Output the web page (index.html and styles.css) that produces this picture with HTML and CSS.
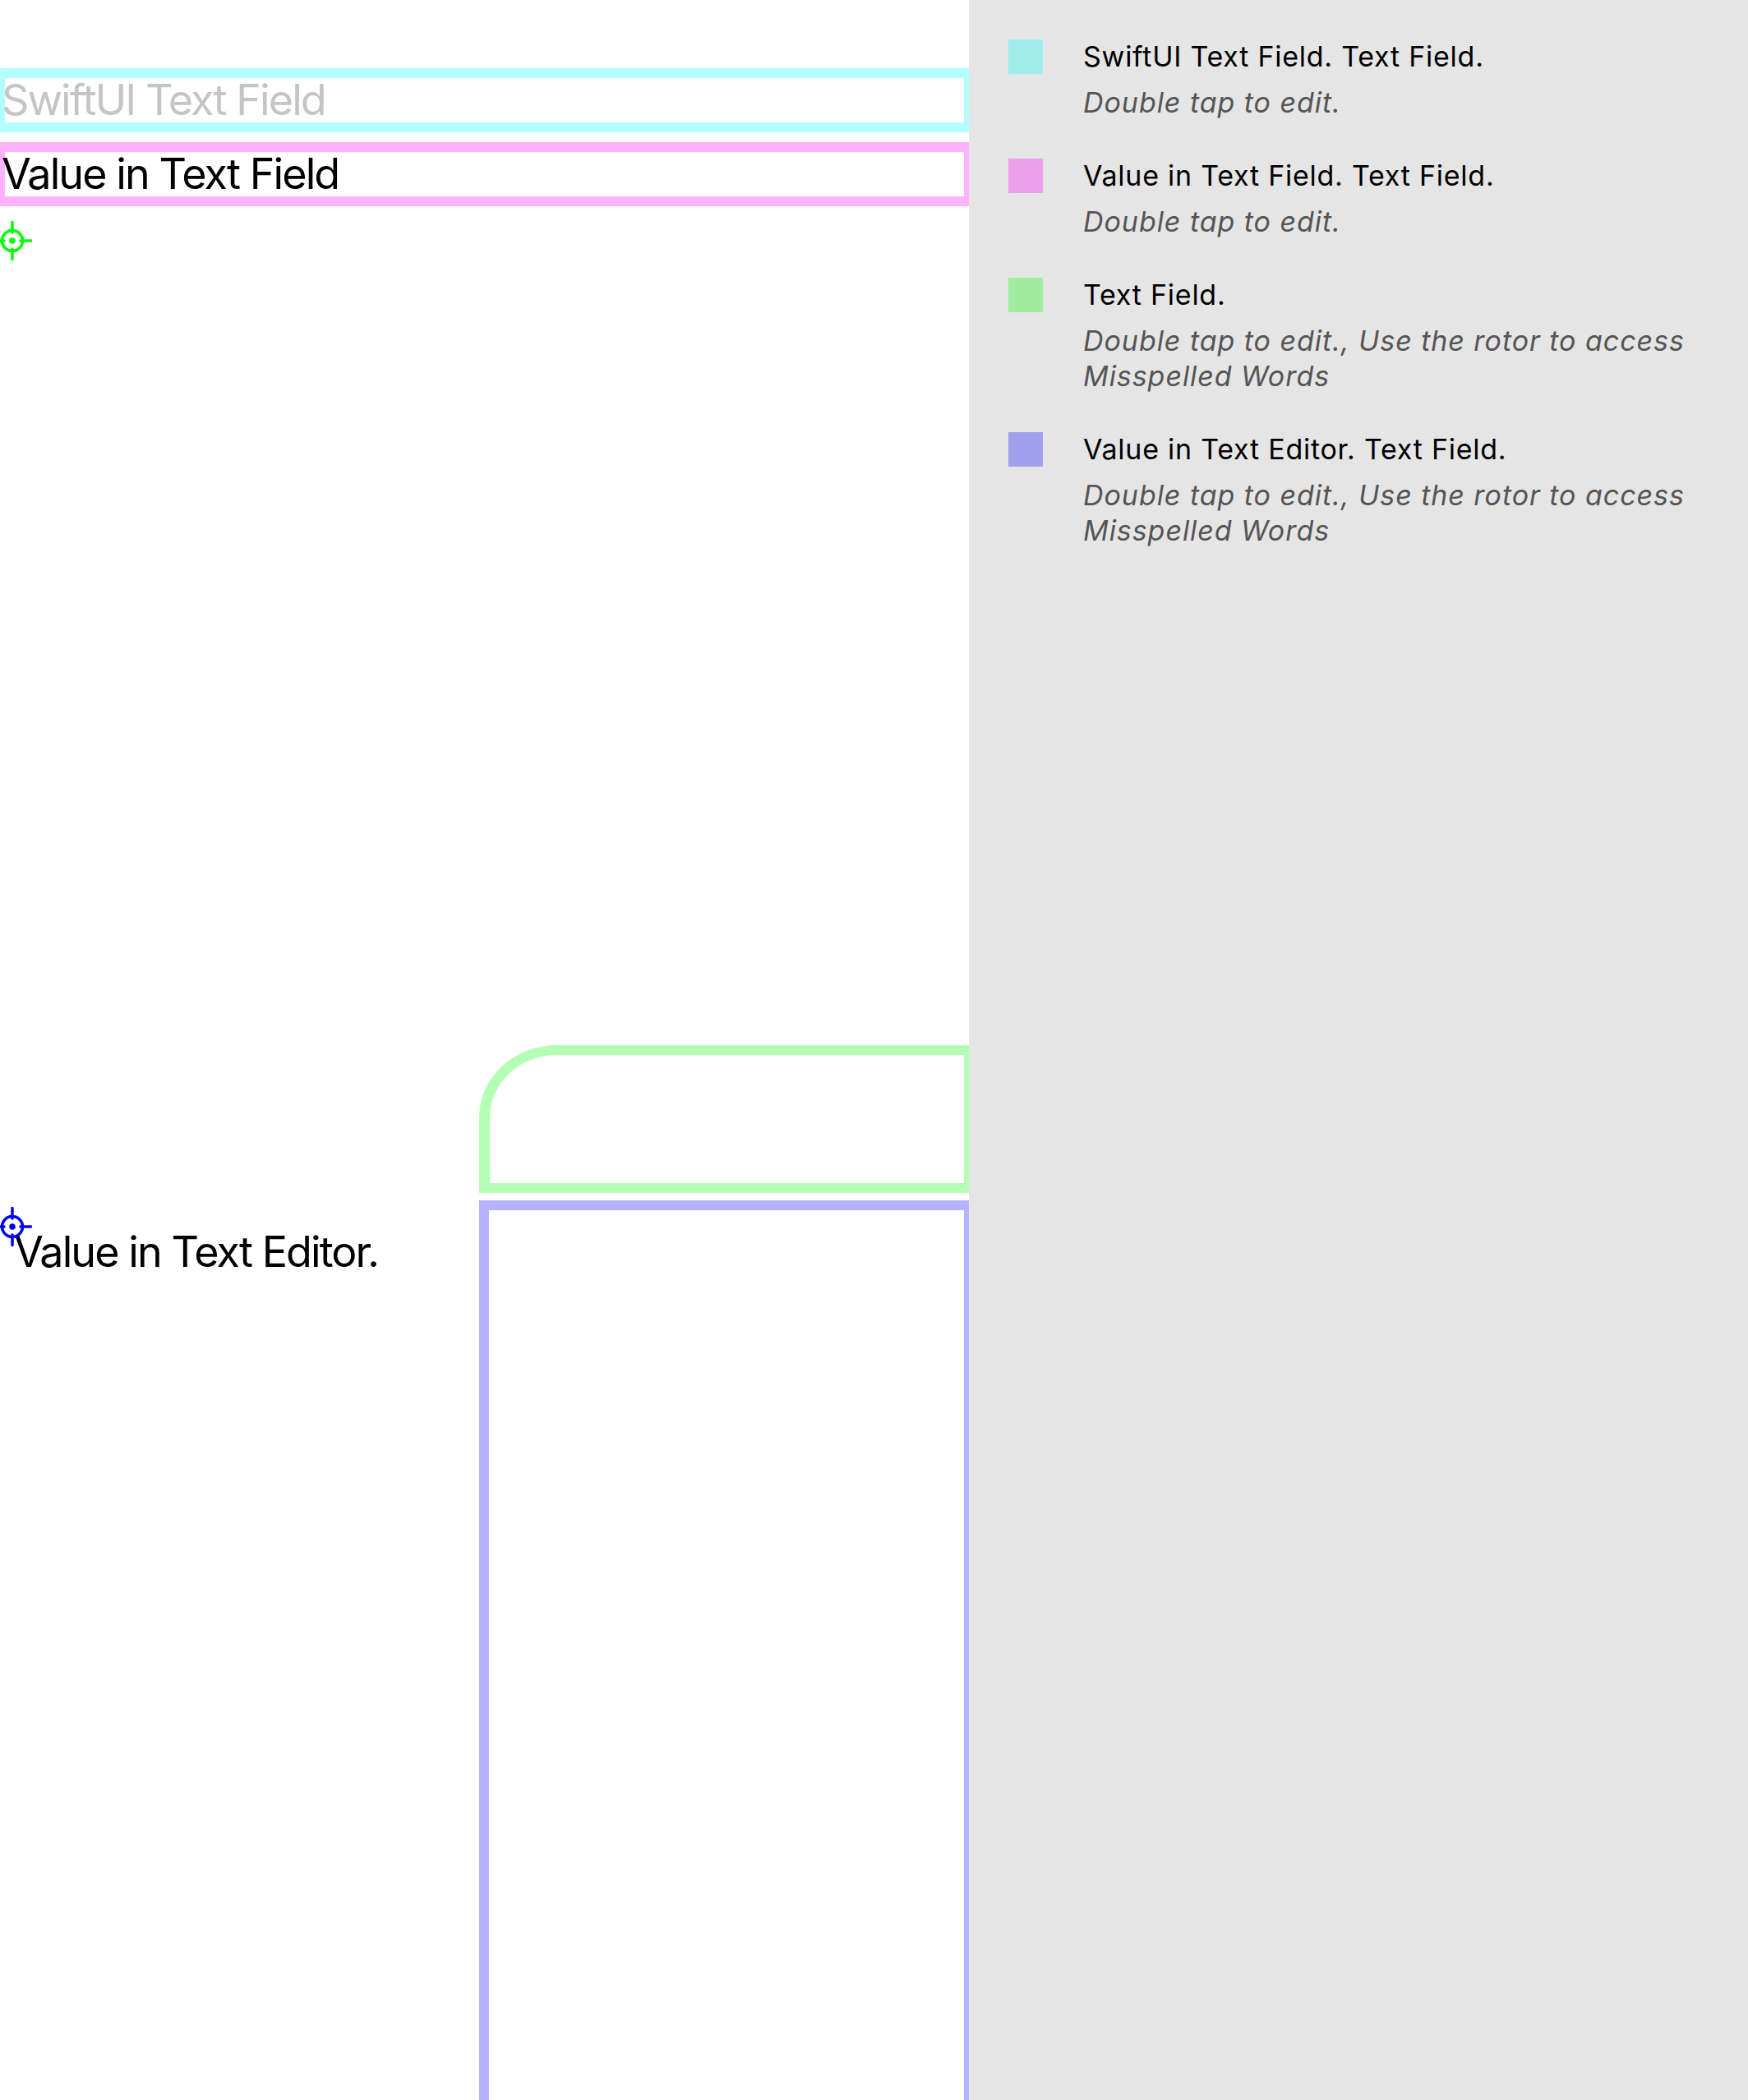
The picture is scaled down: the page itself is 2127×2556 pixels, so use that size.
FILE: index.html
```html
<!DOCTYPE html>
<html lang="en">
<head>
<meta charset="utf-8">
<title>Text Field Accessibility</title>
<link rel="stylesheet" href="styles.css">
</head>
<body>
<div class="screen">
  <main class="canvas">
    <div class="field field-cyan"><span class="placeholder">SwiftUI Text Field</span></div>
    <div class="field field-pink"><span class="value">Value in Text Field</span></div>

    <svg class="focus focus-green" viewBox="0 0 50 50" width="50" height="50" aria-hidden="true">
      <circle cx="25" cy="25" r="12.5" fill="none" stroke="currentColor" stroke-width="3.5"/>
      <circle cx="25" cy="25" r="3.8" fill="currentColor"/>
      <path d="M25 2.5V15M25 35V47.5M2.5 25H15M35 25H47.5" stroke="currentColor" stroke-width="3.5" stroke-linecap="round"/>
    </svg>

    <div class="editor-grid">
      <div class="cell-empty"></div>
      <div class="green-box"></div>
      <div class="editor-label">Value in Text Editor.</div>
      <div class="blue-box"></div>
    </div>

    <svg class="focus focus-blue" viewBox="0 0 50 50" width="50" height="50" aria-hidden="true">
      <circle cx="25" cy="25" r="12.5" fill="none" stroke="currentColor" stroke-width="3.5"/>
      <circle cx="25" cy="25" r="3.8" fill="currentColor"/>
      <path d="M25 2.5V15M25 35V47.5M2.5 25H15M35 25H47.5" stroke="currentColor" stroke-width="3.5" stroke-linecap="round"/>
    </svg>
  </main>

  <aside class="legend">
    <div class="row">
      <span class="swatch sw-cyan"></span>
      <div class="info">
        <div class="title">SwiftUI Text Field. Text Field.</div>
        <div class="hint">Double tap to edit.</div>
      </div>
    </div>
    <div class="row">
      <span class="swatch sw-pink"></span>
      <div class="info">
        <div class="title">Value in Text Field. Text Field.</div>
        <div class="hint">Double tap to edit.</div>
      </div>
    </div>
    <div class="row">
      <span class="swatch sw-green"></span>
      <div class="info">
        <div class="title">Text Field.</div>
        <div class="hint">Double tap to edit., Use the rotor to access Misspelled Words</div>
      </div>
    </div>
    <div class="row">
      <span class="swatch sw-blue"></span>
      <div class="info">
        <div class="title">Value in Text Editor. Text Field.</div>
        <div class="hint">Double tap to edit., Use the rotor to access Misspelled Words</div>
      </div>
    </div>
  </aside>
</div>
</body>
</html>
```

FILE: styles.css
```css
html, body {
  margin: 0;
  padding: 0;
  background: #ffffff;
}

body {
  font-family: Inter, "Noto Sans", "Liberation Sans", sans-serif;
  color: #000000;
}

.screen {
  display: flex;
  width: 2127px;
  height: 2556px;
  overflow: hidden;
}

.canvas {
  position: relative;
  width: 1179px;
  flex: 0 0 1179px;
  padding-top: 83px;
  background: #ffffff;
  box-sizing: border-box;
}

.field {
  box-sizing: border-box;
  height: 78px;
  border-style: solid;
  border-width: 12px 6px;
  font-size: 52px;
  line-height: 54px;
  letter-spacing: -1.9px;
  white-space: nowrap;
  text-indent: -4px;
}

.field-cyan {
  border-color: #b3ffff;
}

.field-pink {
  margin-top: 12px;
  border-color: #ffb3ff;
}

.placeholder {
  color: #c5c5c7;
}

.value {
  color: #000000;
}

.focus {
  position: absolute;
  left: -10px;
}

.focus-green {
  top: 268px;
  color: #00ff00;
}

.focus-blue {
  top: 1468px;
  color: #0000ff;
}

.editor-grid {
  display: grid;
  grid-template-columns: 583px 596px;
  grid-template-rows: 180px 1200px;
  row-gap: 9px;
  margin-top: 1021px;
}

.green-box {
  box-sizing: border-box;
  border-style: solid;
  border-color: #b3ffb3;
  border-width: 12px 6px 12px 13px;
  border-top-left-radius: 95px 88px;
}

.blue-box {
  box-sizing: border-box;
  border-style: solid;
  border-color: #b3b3ff;
  border-width: 12px 6px 0 12px;
}

.editor-label {
  padding-top: 31px;
  padding-left: 17px;
  font-size: 52px;
  line-height: 63px;
  letter-spacing: -1.9px;
  white-space: nowrap;
}

.legend {
  flex: 1;
  background: #e5e5e5;
  padding: 48px 16px 0 48px;
  display: flex;
  flex-direction: column;
  gap: 47px;
}

.row {
  display: flex;
  gap: 49px;
  align-items: flex-start;
}

.swatch {
  flex: 0 0 42px;
  width: 42px;
  height: 42px;
}

.sw-cyan { background: #a0eded; }
.sw-pink { background: #eda0ed; }
.sw-green { background: #a0eda0; }
.sw-blue { background: #a0a0ed; }

.info {
  flex: 1;
  font-size: 34px;
}

.title {
  line-height: 42px;
  letter-spacing: 0.75px;
  color: #000000;
}

.hint {
  margin-top: 13px;
  line-height: 43px;
  letter-spacing: 0.95px;
  font-style: italic;
  color: #555555;
}
```
